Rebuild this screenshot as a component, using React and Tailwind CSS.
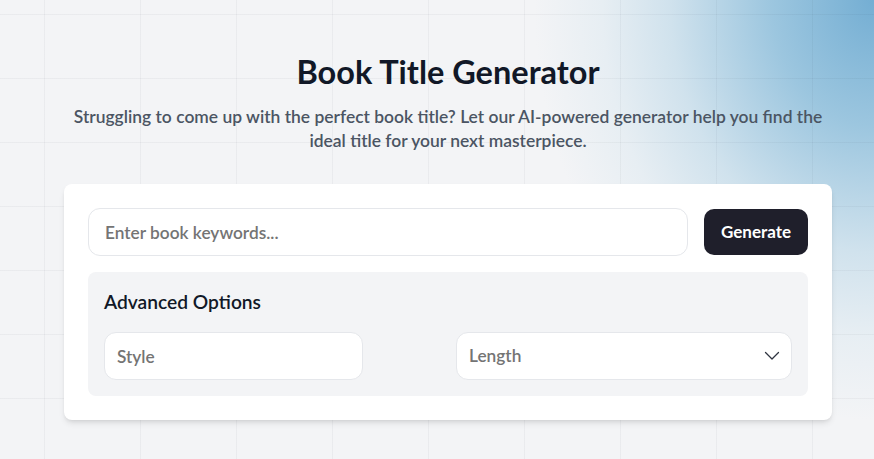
import React from "react";

export default function App() {
  return (
    <div className="relative min-h-screen w-full overflow-hidden bg-[#f3f4f6] font-[Lato,sans-serif]">
      <div className="pointer-events-none absolute inset-0 bg-[radial-gradient(ellipse_340px_420px_at_100%_0%,#74aed3_0%,#9cc6df_30%,#d0e2ed_60%,#e7eef3_80%,rgba(243,244,246,0)_100%)]" />
      <div className="pointer-events-none absolute inset-0 bg-[linear-gradient(to_right,rgba(17,24,39,0.04)_1px,transparent_1px),linear-gradient(to_bottom,rgba(17,24,39,0.04)_1px,transparent_1px)] bg-[size:96px_64px] bg-[position:44px_14px]" />

      <div className="relative pl-[22px] pt-[52px] pb-10">
        <div className="mx-auto max-w-3xl text-center">
          <h1 className="text-[32.5px] font-bold leading-10 text-[#111827]">
            Book Title Generator
          </h1>
          <p className="mt-[13px] text-[17.45px] font-semibold leading-6 text-[#4b5563]">
            Struggling to come up with the perfect book title? Let our AI-powered generator help you find the ideal title for your next masterpiece.
          </p>
        </div>

        <div className="mx-auto mt-[31px] w-[768px] rounded-lg bg-white p-6 shadow-md">
          <div className="flex items-center gap-4">
            <input
              className="h-12 flex-1 rounded-xl border border-gray-200 bg-white px-4 text-[17.3px] font-semibold text-gray-900 outline-none placeholder:text-[#747474]"
              placeholder="Enter book keywords..."
            />
            <button className="h-[46px] w-[104px] rounded-[10px] bg-[#1f1f2b] text-[17px] font-bold text-white">
              Generate
            </button>
          </div>

          <div className="mt-4 rounded-lg bg-[#f3f4f6] p-4">
            <h2 className="text-[19.2px] font-semibold leading-7 text-[#111827]">
              Advanced Options
            </h2>
            <div className="mt-4 grid grid-cols-2 gap-4">
              <input
                className="h-12 w-[259px] rounded-xl border border-gray-200 bg-white px-3 text-[17.3px] font-semibold text-gray-900 outline-none placeholder:text-[#747474]"
                placeholder="Style"
              />
              <div className="flex h-12 items-center justify-between rounded-xl border border-gray-200 bg-white pl-3 pr-[11px] text-[17.3px] font-semibold text-[#747474]">
                <span>Length</span>
                <svg width="16" height="10" viewBox="0 0 16 10" fill="none">
                  <path d="M1.5 1.5 L8 8 L14.5 1.5" stroke="#2f3440" strokeWidth="1.3" strokeLinecap="round" strokeLinejoin="round" />
                </svg>
              </div>
            </div>
          </div>
        </div>
      </div>
    </div>
  );
}
